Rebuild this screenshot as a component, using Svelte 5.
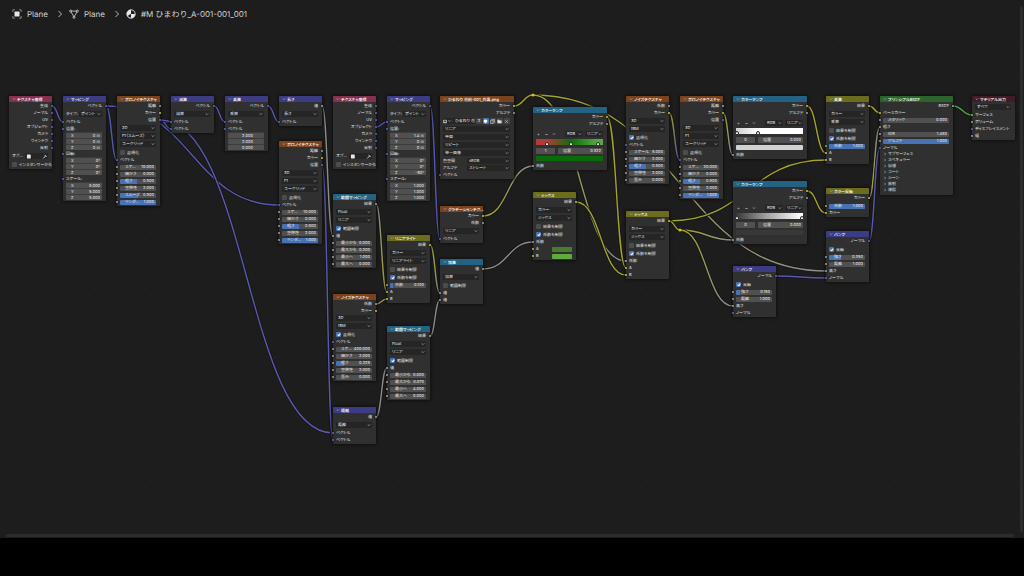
<script>
  const BAR = 28;
  const HEIGHTS = { out: 7, in: 7, swatch: 7, drop: 8, type: 8, pair: 7, check: 8, num: 7, vec: 18, gap: 1, gap3: 3, object: 8, image: 8, tools: 8, ramp: 9, stop: 8, color: 7, panel: 6 };
  const COLORS = { g: '#a1a1a1', y: '#c7c729', p: '#6363c7', s: '#63c763' };
  const WIRES = { g: '#8c8c8c', y: '#a3a329', p: '#5858ae', s: '#52a852' };
  const HEAD = 6;

  const out = (label, c) => ({ k: 'out', label, c });
  const inp = (label, c) => ({ k: 'in', label, c });
  const swatch = (label, color) => ({ k: 'swatch', label, c: 'y', color });
  const drop = (label) => ({ k: 'drop', label });
  const pair = (label, value) => ({ k: 'pair', label, value });
  const check = (label, on = false) => ({ k: 'check', label, on });
  const num = (label, value, fill = 0, c = 'g') => ({ k: 'num', label, value, fill, c });
  const vec = (a, b, c) => ({ k: 'vec', values: [a, b, c] });
  const gap = { k: 'gap' };

  const texCoord = () => [
    ...['生成', 'ノーマル', 'UV', 'オブジェクト', 'カメラ', 'ウィンドウ', '反射'].map((l) => out(l, 'p')),
    gap, { k: 'object', label: 'オブ…' }, check('インスタンサーから')
  ];
  const mapping = (l, r, s) => [
    out('ベクトル', 'p'), gap, { k: 'type', label: 'タイプ:', value: 'ポイント' }, inp('ベクトル', 'p'),
    inp('位置:', 'p'), vec(...l), inp('回転:', 'p'), vec(...r), inp('スケール:', 'p'), vec(...s)
  ];
  const voronoi = (dim, feature, scale, smooth) => [
    out('距離', 'g'), out('カラー', 'y'), out('位置', 'p'), gap,
    drop(dim), drop(feature), drop('ユークリッド'), check('正規化'), inp('ベクトル', 'p'),
    num('スケ…', scale), num('細かさ', '0.000'), num('粗さ', '0.500', 48), num('空隙性', '2.000'),
    ...(smooth ? [num('スムーズ', '0.500', 50)] : []), num('ランダ…', '1.000', 100)
  ];
  const noise = (label, scale, rough, fill) => [
    drop('3D'), drop('fBM'), check('正規化', true), inp('ベクトル', 'p'),
    num(label, scale), num('細かさ', '2.000'), num('粗さ', rough, fill), num('空隙性', '2.000'), num('歪み', '0.000')
  ];
  const mapRange = (a, b, c, d) => [
    out('結果', 'g'), gap, drop('Float'), drop('リニア'), check('範囲制限', true), inp('値', 'g'),
    num('最小から', a), num('最大から', b), num('最小へ', c), num('最大へ', d)
  ];
  const mix = (mode, ...rest) => [out('結果', 'y'), gap, drop('カラー'), drop(mode), check('結果を制限'), check('係数を制限', true), ...rest];
  const ramp = (gradient, stops, index, pos, color) => [
    out('カラー', 'y'), out('アルファ', 'g'), { k: 'gap3' }, { k: 'tools' }, { k: 'ramp', gradient, stops },
    { k: 'stop', index, pos }, { k: 'color', color }, inp('係数', 'g')
  ];
  const bump = (v, fill) => [
    out('ノーマル', 'p'), gap, check('反転', true), num('強さ', v, fill), num('距離', '1.000'), inp('高さ', 'g'), inp('ノーマル', 'p')
  ];

  const nodes = {
    tex1: { x: 9, y: 96, t: 'テクスチャ座標', h: 'input', rows: texCoord() },
    map1: { x: 63, y: 96, t: 'マッピング', h: 'vector', rows: mapping(['0 m', '0 m', '0 m'], ['0°', '0°', '0°'], ['5.000', '5.000', '5.000']) },
    vor1: { x: 117, y: 96, t: 'ボロノイテクスチャ', h: 'texture', rows: voronoi('2D', 'F1（スムーズ）', '10.000', true) },
    sub: { x: 171, y: 96, t: '減算', h: 'vector', rows: [out('ベクトル', 'p'), gap, drop('減算'), inp('ベクトル', 'p'), inp('ベクトル', 'p')] },
    mul: { x: 225, y: 96, t: '乗算', h: 'vector', rows: [out('ベクトル', 'p'), gap, drop('乗算'), inp('ベクトル', 'p'), inp('ベクトル', 'p'), { k: 'vec', plain: true, values: ['2.000', '2.000', '0.000'] }] },
    len: { x: 279, y: 96, t: '長さ', h: 'vector', rows: [out('値', 'g'), gap, drop('長さ'), inp('ベクトル', 'p')] },
    vor2: { x: 279, y: 141, t: 'ボロノイテクスチャ', h: 'texture', rows: voronoi('3D', 'F1', '10.000', false) },
    tex2: { x: 333, y: 96, t: 'テクスチャ座標', h: 'input', rows: texCoord() },
    map2: { x: 387, y: 96, t: 'マッピング', h: 'vector', rows: mapping(['1.4 m', '0 m', '0 m'], ['0°', '0°', '-90°'], ['1.000', '1.000', '1.000']) },
    img: { x: 440, y: 96, w: 74, t: 'ひまわり 花粉-001_白黒.png', h: 'texture', rows: [out('カラー', 'y'), out('アルファ', 'g'), gap, { k: 'image', label: 'ひまわり 花…' }, drop('リニア'), drop('平面'), drop('リピート'), drop('単一画像'), pair('色空間', 'sRGB'), pair('アルファ', 'ストレート'), inp('ベクトル', 'p')] },
    range1: { x: 333, y: 194, t: '範囲マッピング', h: 'convert', rows: mapRange('0.000', '0.200', '1.000', '0.000') },
    linear: { x: 387, y: 235, t: 'リニアライト', h: 'color', rows: mix('リニアライト', num('係数', '0.100', 8), inp('A', 'y'), inp('B', 'y')) },
    grad: { x: 440, y: 206, t: 'グラデーションテク…', h: 'texture', rows: [out('カラー', 'y'), out('係数', 'g'), gap, drop('リニア'), inp('ベクトル', 'p')] },
    add: { x: 440, y: 259, t: '加算', h: 'convert', rows: [out('値', 'g'), gap, drop('加算'), check('範囲制限'), inp('値', 'g'), inp('値', 'g')] },
    noise1: { x: 333, y: 294, t: 'ノイズテクスチャ', h: 'texture', rows: [out('係数', 'g'), out('カラー', 'y'), ...noise('スケ…', '400.000', '0.225', 22)] },
    range2: { x: 387, y: 326, t: '範囲マッピング', h: 'convert', rows: mapRange('0.000', '0.070', '4.000', '0.000') },
    dist: { x: 333, y: 407, t: '距離', h: 'vector', rows: [out('値', 'g'), gap, drop('距離'), inp('ベクトル', 'p'), inp('ベクトル', 'p')] },
    ramp1: { x: 533, y: 107, w: 74, t: 'カラーランプ', h: 'convert', rows: ramp('#b43a35 0%, #b43a35 16%, #0b700b 52%, #57a845 92%', [17, 52, 92], '1', '0.522', '#0a6b0a') },
    mix1: { x: 533, y: 192, t: 'ミックス', h: 'color', rows: mix('ミックス', inp('係数', 'g'), swatch('A', '#467d2f'), swatch('B', '#61a941')) },
    noise2: { x: 626, y: 96, t: 'ノイズテクスチャ', h: 'texture', rows: [out('係数', 'g'), out('カラー', 'y'), gap, ...noise('スケール', '5.000', '0.500', 48)] },
    vor3: { x: 680, y: 96, t: 'ボロノイテクスチャ', h: 'texture', rows: voronoi('3D', 'F1', '20.000', false) },
    mix2: { x: 626, y: 211, t: 'ミックス', h: 'color', rows: mix('ミックス', inp('係数', 'g'), inp('A', 'y'), inp('B', 'y')) },
    ramp2: { x: 733, y: 96, w: 74, t: 'カラーランプ', h: 'convert', rows: ramp('#d0d0d0 0%, #ffffff 33%', [2, 33], '0', '0.000', '#d2d2d2') },
    ramp3: { x: 733, y: 181, w: 74, t: 'カラーランプ', h: 'convert', rows: ramp('#383838 0%, #a0a0a0 45%, #ffffff 98%', [2, 98], '0', '0.000', '#383838') },
    multi: { x: 826, y: 96, t: '乗算', h: 'color', rows: mix('乗算', num('係数', '1.000', 100), inp('A', 'y'), inp('B', 'y')) },
    invert: { x: 826, y: 188, t: 'カラー反転', h: 'color', rows: [out('カラー', 'y'), gap, num('係数', '1.000', 100), inp('カラー', 'y')] },
    bump1: { x: 826, y: 231, t: 'バンプ', h: 'vector', rows: bump('0.350', 34) },
    bump2: { x: 733, y: 266, t: 'バンプ', h: 'vector', rows: bump('0.150', 12) },
    bsdf: { x: 880, y: 96, w: 73, t: 'プリンシプルBSDF', h: 'shader', rows: [out('BSDF', 's'), inp('ベースカラー', 'y'), num('メタリック', '0.000'), inp('粗さ', 'g'), num('IOR', '1.450'), num('アルファ', '1.000', 100), inp('ノーマル', 'p'), ...['サブサーフェス', 'スペキュラー', '伝播', 'コート', 'シーン', '放射', '薄膜'].map((label) => ({ k: 'panel', label })), gap] },
    output: { x: 972, y: 96, t: 'マテリアル出力', h: 'output', rows: [gap, drop('すべて'), inp('サーフェス', 's'), inp('ボリューム', 's'), inp('ディスプレイスメント', 'p'), inp('幅', 'g')] }
  };
  const reroutes = { r1: { x: 533, y: 95 }, r2: { x: 680, y: 230 } };

  // [from node, output index, to node, input index]
  const links = [
    ['tex1', 0, 'map1', 0], ['map1', 0, 'vor1', 0], ['map1', 0, 'sub', 0], ['vor1', 2, 'sub', 1],
    ['map1', 0, 'vor2', 0], ['vor1', 2, 'dist', 0], ['sub', 0, 'mul', 0], ['mul', 0, 'len', 0],
    ['len', 0, 'range1', 0], ['vor2', 2, 'dist', 1], ['tex2', 3, 'map2', 0], ['map2', 0, 'grad', 0],
    ['range1', 0, 'linear', 1], ['noise1', 0, 'linear', 2], ['linear', 0, 'add', 0], ['range2', 0, 'add', 1],
    ['dist', 0, 'range2', 0], ['img', 0, 'r1', 0], ['r1', 0, 'bump1', 2], ['r1', 0, 'mix2', 0],
    ['ramp1', 0, 'mix2', 1], ['grad', 0, 'ramp1', 0], ['add', 0, 'mix1', 0], ['mix1', 0, 'mix2', 2],
    ['noise2', 1, 'vor3', 0], ['vor3', 1, 'ramp2', 0], ['mix2', 0, 'multi', 2], ['mix2', 0, 'r2', 0],
    ['r2', 0, 'ramp3', 0], ['r2', 0, 'bump2', 2], ['ramp2', 0, 'multi', 1], ['ramp3', 0, 'invert', 1],
    ['multi', 0, 'bsdf', 0], ['invert', 0, 'bsdf', 2], ['bump1', 0, 'bsdf', 5], ['bump2', 0, 'bump1', 3],
    ['bsdf', 0, 'output', 0]
  ];

  function socket(id, side, index) {
    if (reroutes[id]) return { x: reroutes[id].x, y: reroutes[id].y - BAR, c: 'y' };
    const n = nodes[id];
    let y = n.y - BAR + HEAD;
    let seen = 0;
    for (const r of n.rows) {
      const match = side === 'out' ? r.k === 'out' : r.k !== 'out' && r.c;
      if (match && seen++ === index) return { x: n.x + (side === 'out' ? (n.w ?? 43) : 0), y: y + 4, c: r.c };
      y += HEIGHTS[r.k];
    }
  }
  const wires = links.map(([a, i, b, j]) => {
    const s = socket(a, 'out', i);
    const e = socket(b, 'in', j);
    const d = (e.x - s.x) / 2;
    return { s, e, d: `M${s.x} ${s.y}C${s.x + d} ${s.y} ${e.x - d} ${e.y} ${e.x} ${e.y}` };
  });
</script>

{#snippet chevron()}
  <svg class="chev" viewBox="0 0 6 6" aria-hidden="true"><path d="M1 2l2 2 2-2" /></svg>
{/snippet}

{#snippet select(label, name)}
  <span class="select">
    <select aria-label={name ?? label}><option>{label}</option></select>
    {@render chevron()}
  </span>
{/snippet}

<div class="window">
  <main class="editor">
    <nav class="path" aria-label="Path">
      <a href="#object">
        <svg viewBox="0 0 12 12" aria-hidden="true"><rect x="3" y="3" width="6" height="6" rx="1" fill="#e6e6e6" /><path d="M1 3.500V1h2.500M8.500 1H11v2.500M11 8.500V11H8.500M3.500 11H1V8.500" fill="none" stroke="#9a9a9a" /></svg>
        Plane
      </a>
      <svg class="sep" viewBox="0 0 6 8" aria-hidden="true"><path d="M1.500 1L4.500 4l-3 3" /></svg>
      <a href="#mesh">
        <svg viewBox="0 0 12 12" aria-hidden="true"><path d="M3 2.500h6M2.500 3.500L6 9.500l3.500-6" fill="none" stroke="#cfcfcf" /><g fill="#1d1d1d" stroke="#dcdcdc"><circle cx="2" cy="2.500" r="1.200" /><circle cx="10" cy="2.500" r="1.200" /><circle cx="6" cy="10" r="1.200" /></g></svg>
        Plane
      </a>
      <svg class="sep" viewBox="0 0 6 8" aria-hidden="true"><path d="M1.500 1L4.500 4l-3 3" /></svg>
      <a href="#material">
        <svg viewBox="0 0 12 12" aria-hidden="true"><circle cx="6" cy="6" r="5" fill="#e8e8e8" stroke="#e8e8e8" /><path d="M6 1.500A4.500 4.500 0 0 1 10.500 6H6zM6 6v4.500A4.500 4.500 0 0 1 2.300 8.500Q3.500 6.500 6 6z" fill="#1d1d1d" /></svg>
        #M ひまわり_A-001-001_001
      </a>
    </nav>

    <div class="canvas">
      <svg class="wires" aria-hidden="true">
        <defs>
          {#each wires as w, i}
            <linearGradient id="wire{i}" gradientUnits="userSpaceOnUse" x1={w.s.x} y1={w.s.y} x2={w.e.x} y2={w.e.y + 0.01}>
              <stop stop-color={WIRES[w.s.c]} /><stop offset="1" stop-color={WIRES[w.e.c]} />
            </linearGradient>
          {/each}
        </defs>
        {#each wires as w, i}
          <path class="shade" d={w.d} />
          <path class="wire" d={w.d} stroke="url(#wire{i})" />
        {/each}
        {#each Object.values(reroutes) as r}
          <circle cx={r.x} cy={r.y - BAR} r="1.500" fill={COLORS.y} />
        {/each}
      </svg>

      {#each Object.entries(nodes) as [id, n] (id)}
        <section class="node" style="left:{n.x}px;top:{n.y - BAR}px;width:{n.w ?? 43}px">
          <h2 class={n.h}>{@render chevron()}<span>{n.t}</span></h2>
          {#each n.rows as r}
            <div class="row {r.k}" style="height:{HEIGHTS[r.k]}px">
              {#if r.c}<i class="socket" style="background:{COLORS[r.c]}"></i>{/if}
              {#if r.k === 'out' || r.k === 'in'}
                <span>{r.label}</span>
              {:else if r.k === 'swatch'}
                <label>{r.label}<button aria-label={r.label} style="background:{r.color}"></button></label>
              {:else if r.k === 'drop'}
                {@render select(r.label)}
              {:else if r.k === 'type' || r.k === 'pair'}
                <span class="name">{r.label}</span>{@render select(r.value, r.label)}
              {:else if r.k === 'check'}
                <label><input type="checkbox" checked={r.on} />{r.label}</label>
              {:else if r.k === 'num'}
                <label class="field" style="--fill:{r.fill}%">{r.label}<input value={r.value} /></label>
              {:else if r.k === 'vec'}
                {#each r.values as v, i}
                  <label class="field" class:plain={r.plain}>{r.plain ? '' : 'XYZ'[i]}<input aria-label={'XYZ'[i]} value={v} /></label>
                {/each}
              {:else if r.k === 'object'}
                <span class="name">{r.label}</span>
                <button class="picker" aria-label="オブジェクト">
                  <svg viewBox="0 0 24 5"><rect x="2" y=".5" width="4" height="4" rx=".5" fill="#e8e8e8" /><path d="M19 4.500L21.500 2M20.500 .8l2 2" stroke="#d8d8d8" /></svg>
                </button>
              {:else if r.k === 'image'}
                <button class="thumb" aria-label="画像"><svg viewBox="0 0 6 6"><rect x="1" y="1" width="4" height="4" fill="none" stroke="#ddd" /><path d="M1 5l2-2 2 2z" fill="#ddd" /></svg>{@render chevron()}</button>
                <input aria-label="画像名" value={r.label} />
                <button>2</button>
                <button class="on" aria-label="フェイクユーザー"><svg viewBox="0 0 6 6"><path d="M1 1.200L3 .5l2 .7v2L3 5.500 1 3.200z" fill="#fff" /></svg></button>
                <button aria-label="新規"><svg viewBox="0 0 6 6"><path d="M.8 1.500h3v4h-3zM2 .5h3.200v4" fill="none" stroke="#ccc" stroke-width=".8" /></svg></button>
                <button aria-label="開く"><svg viewBox="0 0 6 6"><path d="M.5 1h2l.6.8h2.400V5h-5z" fill="#ddd" /></svg></button>
                <button aria-label="解除"><svg viewBox="0 0 6 6"><path d="M1.500 1.500l3 3M4.500 1.500l-3 3" stroke="#bbb" stroke-width=".8" /></svg></button>
              {:else if r.k === 'tools'}
                <button class="flat" aria-label="追加"><svg viewBox="0 0 6 6"><path d="M1.500 3h3M3 1.800v2.400" stroke="#999" stroke-width=".7" /></svg></button>
                <button class="flat" aria-label="削除"><svg viewBox="0 0 6 6"><path d="M1.500 3h3" stroke="#bbb" stroke-width=".8" /></svg></button>
                <button class="flat" aria-label="ツール">{@render chevron()}</button>
                <span class="push"></span>
                {@render select('RGB', 'カラーモード')}{@render select('リニア', '補間')}
              {:else if r.k === 'ramp'}
                <div class="band" style="background:linear-gradient(90deg,{r.gradient})">
                  {#each r.stops as s}<i style="left:{s}%"></i>{/each}
                </div>
              {:else if r.k === 'stop'}
                <label class="field index"><input aria-label="番号" value={r.index} /></label>
                <label class="field">位置<input value={r.pos} /></label>
              {:else if r.k === 'color'}
                <button aria-label="カラー" style="background:{r.color}"></button>
              {:else if r.k === 'panel'}
                <button class="toggle"><svg viewBox="0 0 6 6" aria-hidden="true"><path d="M2 1l2 2-2 2" /></svg>{r.label}</button>
              {/if}
            </div>
          {/each}
        </section>
      {/each}
    </div>
    <div class="vbar"></div>
    <div class="hbar"></div>
  </main>
</div>

<style>
  :global(body) { background: #000; }
  .window { display: flex; flex-direction: column; height: 100vh; padding-bottom: 38px; box-sizing: border-box; font-family: Inter, 'Noto Sans CJK JP', sans-serif; text-rendering: geometricPrecision; color: #e6e6e6; }
  .editor { position: relative; flex: 1; display: flex; flex-direction: column; overflow: hidden; background: #1d1d1d; }
  .path { display: flex; align-items: center; gap: 6px; height: 28px; padding-left: 12px; font-size: 8px; line-height: 12px; flex: none; }
  .path a { display: flex; align-items: center; gap: 5px; color: #d6d6d6; text-decoration: none; white-space: nowrap; }
  .path a svg { width: 10px; height: 10px; }
  .sep { width: 6px; height: 8px; margin-left: 3px; fill: none; stroke: #b8b8b8; }
  .canvas { position: relative; flex: 1; font-size: 4px; line-height: 6px; font-feature-settings: 'palt'; background: radial-gradient(circle, #222 1px, transparent 1px) 12px 4px / 31px 31px; }
  .wires { position: absolute; inset: 0; width: 100%; height: 100%; fill: none; }
  .shade { stroke: #141414; stroke-width: 3; }
  .wire { stroke-width: 1.4; }
  .node { position: absolute; padding-bottom: 1px; background: #303030; border-radius: 1px; box-shadow: 0 0 3px 1px #101010; }
  h2 { display: flex; align-items: center; gap: 1px; height: 6px; margin: 0; padding: 0 2px 0 3px; border-radius: 1px 1px 0 0; font-size: 4px; font-weight: 500; color: #fff; white-space: nowrap; box-sizing: border-box; }
  h2 span { padding-top: 1px; }
  .input { background: #83314f; }
  .vector { background: #3c3c83; }
  .texture { background: #7b431d; }
  .convert { background: #246283; }
  .color { background: #6c6c1e; }
  .shader { background: #2b652b; }
  .output { background: #411c26; }
  .chev, .toggle svg { width: 4px; height: 4px; flex: none; fill: none; stroke: #b0b0b0; stroke-width: 1; }
  .row { position: relative; display: flex; align-items: center; box-sizing: border-box; padding: 0 4px 0 3px; white-space: nowrap; }
  .row.out { justify-content: flex-end; }
  .row.out, .row.in, .row.check, .row.swatch { padding-top: 1px; }
  .socket { position: absolute; left: -1px; top: 3px; width: 2px; height: 2px; border-radius: 1px; box-shadow: 0 0 0 1px #14141466; }
  .out .socket { left: auto; right: -1px; }
  input, select, button { font: inherit; font-feature-settings: inherit; text-rendering: inherit; color: inherit; margin: 0; padding: 0; border: 0; box-sizing: border-box; min-width: 0; border-radius: 1px; }
  button svg { display: block; height: 5px; }
  .select { position: relative; display: flex; flex: 1; align-items: center; min-width: 0; background: #252525; border-radius: 1px; }
  .select .chev { position: absolute; right: 1px; }
  select { appearance: none; flex: 1; height: 6px; padding-left: 2px; line-height: 6px; background: none; }
  .name { width: 13px; }
  .pair .name { width: 24px; }
  .check label { display: flex; align-items: center; gap: 2px; }
  .check input { appearance: none; width: 5px; height: 5px; background: #4c4c4c; display: grid; place-items: center; }
  .check input:checked { background: #4772b3; }
  .check input:checked::after { content: ''; width: 1px; height: 2px; border: solid #fff; border-width: 0 1px 1px 0; transform: rotate(40deg); }
  .field { display: flex; flex: 1; align-items: center; min-width: 0; height: 6px; padding: 0 2px 0 5px; border-radius: 1px; background: linear-gradient(90deg, #4772b3 var(--fill, 0%), #505050 var(--fill, 0%)); box-sizing: border-box; }
  .num .field { height: 5px; margin-top: 1px; }
  .field input { flex: 1; width: 0; height: 6px; line-height: 6px; background: none; text-align: right; }
  .vec { flex-direction: column; align-items: stretch; }
  .vec .field { flex: none; border-top: 1px solid #3c3c3c; }
  .plain input, .index input { text-align: center; }
  .picker { flex: 1; height: 6px; background: #252525; }
  .picker svg { width: 100%; }
  .image { gap: 1px; }
  .image button { width: 6px; height: 6px; line-height: 6px; background: #454545; }
  .image button svg { width: 5px; }
  .image .thumb { display: flex; align-items: center; width: 9px; background: #252525; }
  .image .on { background: #4772b3; }
  .image input { flex: 1; height: 6px; padding-left: 2px; background: #252525; }
  .swatch label { display: flex; flex: 1; justify-content: space-between; align-items: center; }
  .swatch button { width: 20px; height: 5px; }
  .tools { gap: 2px; }
  .flat { width: 6px; height: 6px; background: none; }
  .tools .select { flex: none; width: 18px; }
  .push { flex: 1; }
  .band { position: relative; flex: 1; height: 6px; margin-bottom: 1px; }
  .band i { position: absolute; bottom: -1px; width: 4px; height: 4px; margin-left: -2px; box-sizing: border-box; border: 1px solid #2c2c2c; border-radius: 2px 2px 1px 1px; background: #e6e6e6; }
  .stop { gap: 3px; }
  .stop .index { flex: none; width: 19px; padding: 0; }
  .row.color { background: none; }
  .row.color button { flex: 1; height: 5px; }
  .toggle { display: flex; align-items: center; gap: 1px; background: none; }
  .vbar { position: absolute; right: 1px; top: 6px; bottom: 6px; width: 3px; border-radius: 2px; background: #2c2c2c; }
  .hbar { position: absolute; left: 6px; right: 10px; bottom: 1px; height: 3px; border-radius: 2px; background: #2c2c2c; }
</style>
